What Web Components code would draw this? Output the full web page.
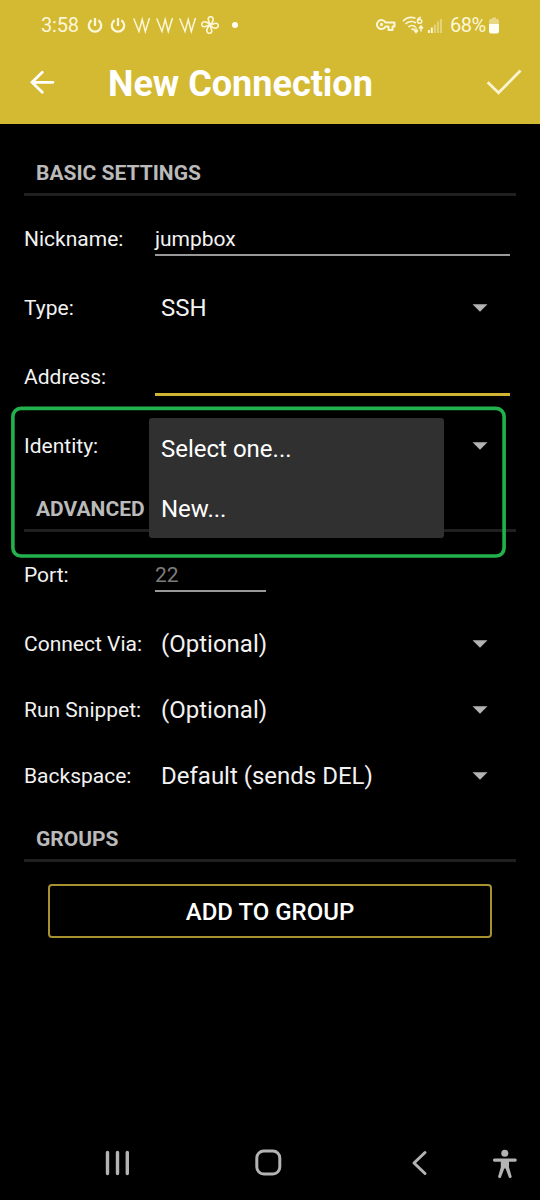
<!DOCTYPE html>
<html lang="en">
<head>
<meta charset="utf-8">
<title>New Connection</title>
<style>
html,body{margin:0;background:#000}
body{width:540px;height:1200px;overflow:hidden;font-family:Roboto,"Liberation Sans",sans-serif;color:#f2f2f2}
</style>
</head>
<body>
<connection-screen></connection-screen>
<script>
const define = (name, html) => {
  const t = document.createElement('template');
  t.innerHTML = html;
  customElements.define(name, class extends HTMLElement {
    constructor() {
      super();
      this.attachShadow({mode: 'open'}).appendChild(t.content.cloneNode(true));
    }
  });
};

define('status-bar', `
<style>
:host{display:flex;align-items:center;height:50px;box-sizing:border-box;padding-left:41px;color:#fcf7d8;font-size:20px;line-height:24px}
svg{display:block;flex:none;fill:none;stroke:currentColor;stroke-width:2}
.time{width:46px;letter-spacing:-.2px}
.power{width:16px;height:18px;margin-right:7px}
.w{width:18px;height:18px;margin-right:5px;stroke-width:1.5}
.fan{width:18px;height:18px;margin-left:-1px;stroke-width:1.6}
.dot{width:6px;height:6px;border-radius:50%;background:#fffdf0;margin-left:13px}
.key{width:20px;height:16px;margin-left:138px}
.wifi{width:23px;height:20px;margin-left:6px}
.signal{width:15px;height:18px;margin-left:3px;stroke:none;fill:currentColor}
.pct{margin-left:7px;width:38px;letter-spacing:-.5px}
.battery{width:10px;height:18px;margin-left:1px;stroke:none;fill:currentColor}
</style>
<span class="time">3:58</span>
<svg class="power" viewBox="0 0 16 18"><path d="M4.600 4.200a6.200 6.200 0 1 0 6.800 0M8 2v8" stroke-width="2.300"/></svg>
<svg class="power" viewBox="0 0 16 18"><path d="M4.600 4.200a6.200 6.200 0 1 0 6.800 0M8 2v8" stroke-width="2.300"/></svg>
<svg class="w" viewBox="0 0 18 18"><path d="M.7 2.500 6 15.500 9.200 3.500 12.300 15.500 16.500 2"/></svg>
<svg class="w" viewBox="0 0 18 18"><path d="M.7 2.500 6 15.500 9.200 3.500 12.300 15.500 16.500 2"/></svg>
<svg class="w" viewBox="0 0 18 18"><path d="M.7 2.500 6 15.500 9.200 3.500 12.300 15.500 16.500 2"/></svg>
<svg class="fan" viewBox="0 0 18 18" stroke-linejoin="round"><path d="M9 9V4Q9 1.200 11.500 1.200 14.200 1.500 13.800 4.500 13 7.500 9 9" transform="rotate(-18 9 9)"/><path transform="rotate(72 9 9)" d="M9 9V4Q9 1.200 11.500 1.200 14.200 1.500 13.800 4.500 13 7.500 9 9"/><path transform="rotate(162 9 9)" d="M9 9V4Q9 1.200 11.500 1.200 14.200 1.500 13.800 4.500 13 7.500 9 9"/><path transform="rotate(252 9 9)" d="M9 9V4Q9 1.200 11.500 1.200 14.200 1.500 13.800 4.500 13 7.500 9 9"/></svg>
<span class="dot"></span>
<svg class="key" viewBox="0 0 20 16"><path d="M9.500 5.500H18.500v4h-2V13h-4V9.500H9.500A4.500 4.500 0 1 1 9.500 5.500z" stroke-linejoin="round"/><circle cx="5.600" cy="7.500" r="1" stroke-width="1.300"/></svg>
<svg class="wifi" viewBox="0 0 23 20"><path d="M1 6.200C4.500 2.500 9 1.700 13.500 3.200M3.500 9c3-3 7.500-3.300 10.500-1M6.500 12c2-1.800 5-1.800 7 0M9.500 14.700c1-.8 2-.8 3 0" stroke-width="1.700"/><path d="M19 2.200c-2.500.5-3.700 2.200-3.500 4 .1 3 4.300 2.600 4.300 0 0-2.200-3.300-2.300-4.200-.3" stroke-width="1.500"/><path d="M14 12.500v4.500m-2-2 2 2.500 2-2.500M19 16.500v-5m-2 2 2-2.500 2 2.500" stroke-width="1.500"/></svg>
<svg class="signal" viewBox="0 0 15 18"><path d="M0 14h1.900v3H0zM2.900 11.500h1.900V17H2.900z"/><path opacity=".45" d="M5.900 8.500h2V17h-2zM8.900 5.500h2V17h-2zM11.900 3h2v14h-2z"/></svg>
<span class="pct">68%</span>
<svg class="battery" viewBox="0 0 10 18"><path opacity=".5" d="M3 1.500h4V3h2l1 1.500V8H0V4.500L1 3h2z"/><path d="M0 8h10v7.500q0 2-2 2H2q-2 0-2-2z" fill="#fffef4"/></svg>
`);

define('app-bar', `
<style>
:host{display:block;height:124px;background:#d4b932;box-sizing:border-box}
.row{display:flex;align-items:center;height:68px;padding-left:27px;padding-right:17px}
h1{margin:0 0 0 53px;flex:1;font-size:36px;line-height:44px;font-weight:700;color:#fff;white-space:nowrap}
svg{display:block;flex:none;fill:none;stroke:#fff}
</style>
<status-bar></status-bar>
<div class="row">
<svg width="28" height="28" viewBox="0 0 28 28"><path d="M15.300 2.300 5 12.300l10.300 10M5 12.300h21" stroke-width="2.800" stroke-linecap="round" stroke-linejoin="miter"/></svg>
<h1><slot></slot></h1>
<svg width="38" height="32" viewBox="0 0 38 32"><path d="M2.700 14.200 13.500 24.800 35.500 2.500" stroke="#fbf4d1" stroke-width="2.800"/></svg>
</div>
`);

define('section-heading', `
<style>
:host{display:block;height:46px;margin:0 24px;box-sizing:border-box;border-bottom:3px solid #202020;padding:0 12px;font-size:21px;line-height:46px;font-weight:700;color:#bababa;white-space:nowrap}
</style><slot></slot>
`);

define('form-row', `
<style>
:host{display:grid;grid-template-columns:131px 1fr;height:69px;align-items:center;padding:0 30px 0 24px;font-size:21px;line-height:26px;white-space:nowrap}
:host([short]){height:66px}
</style>
<slot name="label"></slot><slot></slot>
`);

define('text-field', `
<style>
:host{display:block;height:52px;align-self:start;box-sizing:border-box;border-bottom:2px solid #999;padding-top:22px}
:host([active]){height:54px;border-bottom:3px solid #d0b534}
:host([hint]){width:111px;height:52px;color:#7c7c7c}
</style><slot></slot>
`);

define('select-field', `
<style>
:host{display:flex;align-items:center;justify-content:space-between;padding:0 22px 0 6px;font-size:24px;line-height:30px}
svg{display:block;margin-left:auto}
</style>
<slot></slot><svg width="16" height="8" viewBox="0 0 16 8"><path d="M.5.300h15L8 7.800z" fill="#b3b3b3"/></svg>
`);

define('option-menu', `
<style>
:host{position:absolute;left:149px;top:418px;width:295px;height:120px;background:#303030;border-radius:3px;font-size:24px;color:#fff}
::slotted(div){height:60px;line-height:62px;padding-left:12px}
</style><slot></slot>
`);

define('focus-frame', `
<style>
:host{position:absolute;left:11px;top:406px;width:495px;height:152px}
svg{display:block}
</style>
<svg width="495" height="152"><rect x="1.900" y="2.400" width="491.200" height="147.600" rx="8" fill="none" stroke="#22b14c" stroke-width="3.600"/></svg>
`);

define('outline-button', `
<style>
:host{display:flex;align-items:center;justify-content:center;height:54px;margin:22px 48px 0;padding-top:2px;box-sizing:border-box;border:2px solid #a8922f;border-radius:4px;font-size:24px;font-weight:500;color:#fff}
</style><slot></slot>
`);

define('nav-bar', `
<style>
:host{display:flex;align-items:center;height:75px;padding-left:104px;margin-top:auto}
svg{display:block;flex:none;fill:none;stroke:#b3b3b3;stroke-width:3;stroke-linecap:round}
</style>
<svg width="28" height="30" viewBox="0 0 28 30"><path d="M3.500 4.500v21M13.500 4.500v21M23.300 4.500v21" stroke-width="3.400"/></svg>
<svg width="28" height="30" viewBox="0 0 28 30" style="margin-left:122px"><rect x="2.800" y="3" width="23" height="23" rx="7"/></svg>
<svg width="18" height="30" viewBox="0 0 18 30" style="margin-left:129px"><path d="M14 4.500 3 15l11 10.500" stroke-linejoin="round"/></svg>
<svg width="26" height="32" viewBox="0 0 26 32" style="margin-left:63px;margin-top:3px"><g fill="#b3b3b3" stroke="none"><circle cx="12.800" cy="5.200" r="3.500"/><path d="M2.500 10.500h20.700a1.600 1.600 0 0 1 0 3.200H17v5.500l2.600 9a1.500 1.500 0 0 1-2.900.8L13.600 20.500h-1.300l-3.200 8.500a1.500 1.500 0 0 1-2.900-.8l2.600-9v-5.500H2.500a1.600 1.600 0 0 1 0-3.200z"/></g></svg>
`);

define('connection-screen', `
<style>
:host{display:flex;flex-direction:column;position:relative;width:540px;height:1200px;background:#000}
app-bar{margin-bottom:26px}
section-heading + form-row{margin-top:8px}
section-heading.mid{margin-top:6px}
section-heading.last{margin-top:7px}
.port{margin-bottom:2px}
</style>
<app-bar>New Connection</app-bar>
<section-heading>BASIC SETTINGS</section-heading>
<form-row><span slot="label">Nickname:</span><text-field>jumpbox</text-field></form-row>
<form-row><span slot="label">Type:</span><select-field>SSH</select-field></form-row>
<form-row><span slot="label">Address:</span><text-field active></text-field></form-row>
<form-row><span slot="label">Identity:</span><select-field></select-field></form-row>
<section-heading class="mid">ADVANCED</section-heading>
<form-row class="port"><span slot="label">Port:</span><text-field hint>22</text-field></form-row>
<form-row short><span slot="label">Connect Via:</span><select-field>(Optional)</select-field></form-row>
<form-row short><span slot="label">Run Snippet:</span><select-field>(Optional)</select-field></form-row>
<form-row short><span slot="label">Backspace:</span><select-field>Default (sends DEL)</select-field></form-row>
<section-heading class="last">GROUPS</section-heading>
<outline-button>ADD TO GROUP</outline-button>
<nav-bar></nav-bar>
<option-menu><div>Select one...</div><div>New...</div></option-menu>
<focus-frame></focus-frame>
`);
</script>
</body>
</html>
